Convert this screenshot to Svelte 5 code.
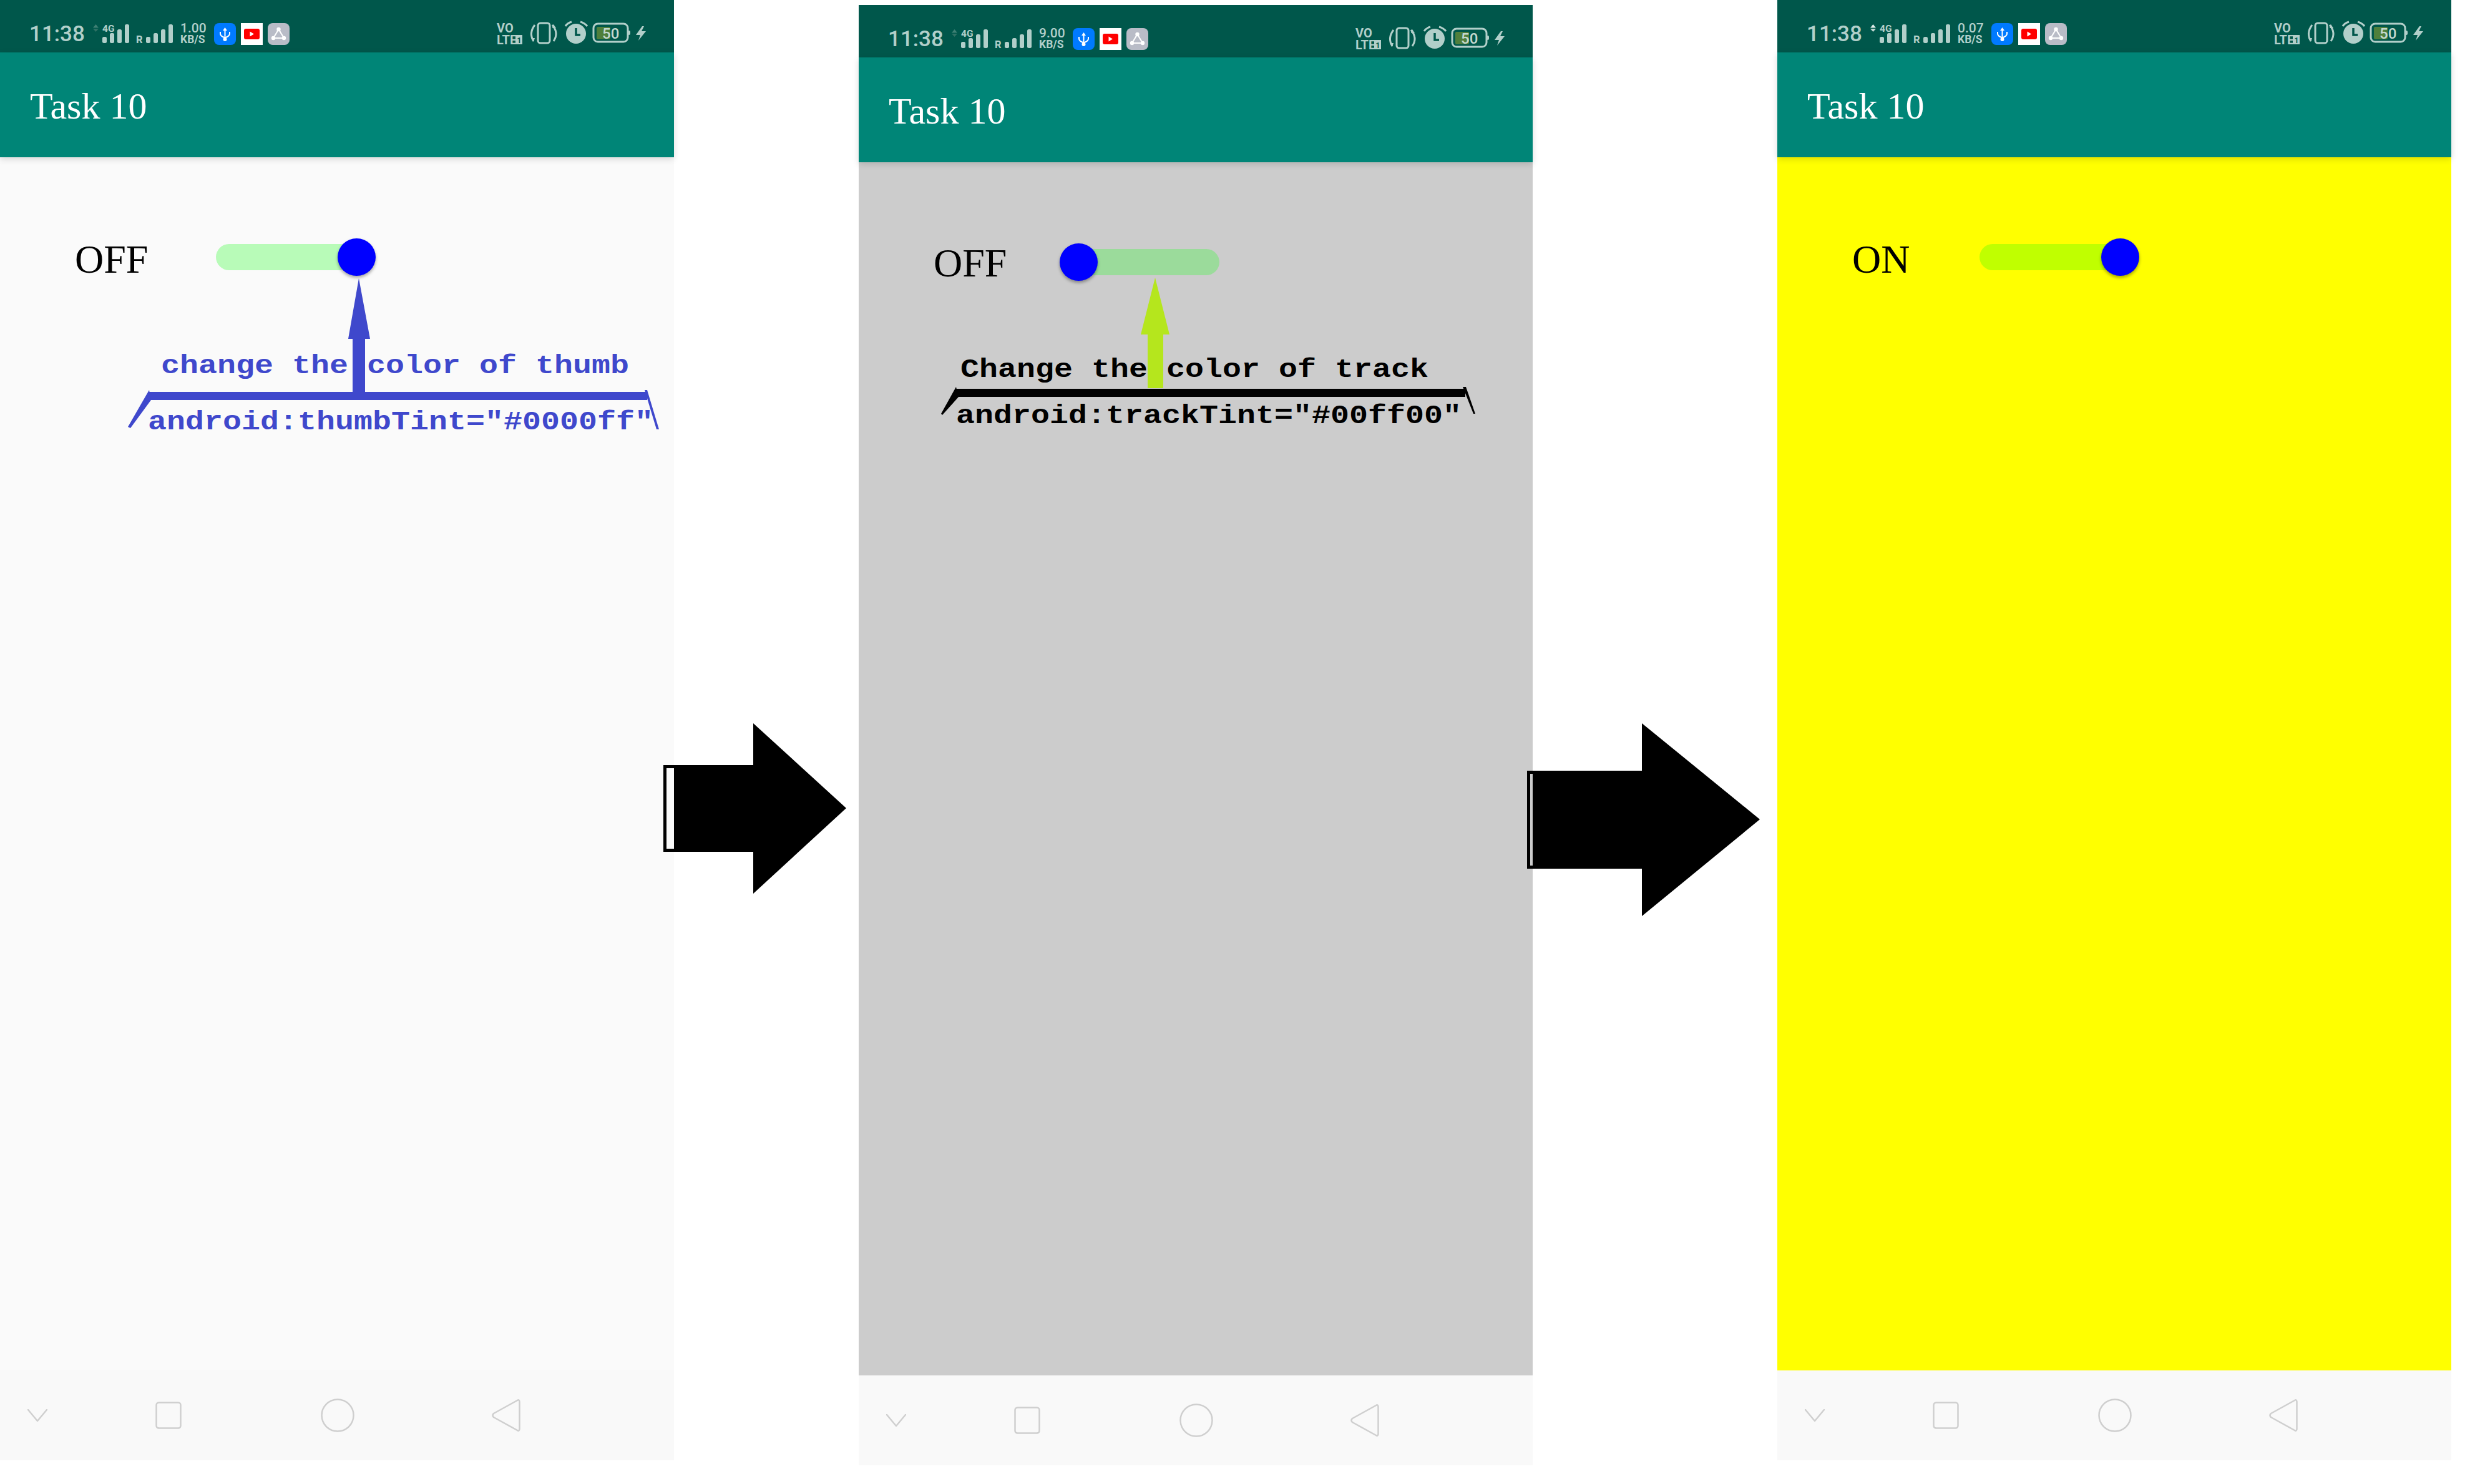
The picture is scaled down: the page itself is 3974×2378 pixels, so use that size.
<script>
  const panels = [
    { id: 'a', speed: '1.00', up: '#3f8074', down: '#2f7165', label: 'OFF', thumb: 'right',
      ink: '#3f48cc', arrowInk: '#3f48cc',
      line1: 'change the color of thumb', x1: 258, y1: 598,
      line2: 'android:thumbTint="#0000ff"', x2: 237, y2: 688,
      arrow: '575,446 593,543 585,543 585,630 565,630 565,543 558,543',
      bar: { x: 239, y: 628, w: 798, h: 13 },
      left: '239,625 242,641 209,686 205,684', right: '1033,625 1037,625 1056,688 1052,688' },
    { id: 'b', speed: '9.00', up: '#3f8074', down: '#2f7165', label: 'OFF', thumb: 'left',
      ink: '#000', arrowInk: '#b5e61d',
      line1: 'Change the color of track', x1: 163, y1: 596,
      line2: 'android:trackTint="#00ff00"', x2: 156, y2: 670,
      arrow: '475,437 498,528 488,528 488,614 463,614 463,528 452,528',
      bar: { x: 155, y: 615, w: 817, h: 13 },
      left: '156,612 160,628 134,657 132,655', right: '968,612 973,612 988,655 985,655' },
    { id: 'c', speed: '0.07', up: '#e4efed', down: '#c3d8d4', label: 'ON', thumb: 'right' }
  ];
  const sig = [[59, 10], [53, 16], [47, 22], [39, 30]];
</script>

<div class="page">
  {#each panels as p}
    <section class="panel {p.id}">
      <div class="status">
        <span class="time">11:38</span>
        <svg class="signal" width="130" height="36" viewBox="149 36 130 36">
          <polygon points="153.500,39 158,44.500 149,44.500" fill={p.up} />
          <polygon points="153.500,51 158,46 149,46" fill={p.down} />
          <text class="tiny" x="164" y="51">4G</text>
          {#each sig as s, i}
            <rect x={164 + i * 12} y={s[0]} width="7" height={s[1]} rx="2.500" />
            <rect x={234 + i * 12} y={s[0]} width="7" height={s[1]} rx="2.500" />
          {/each}
          <text class="tiny r" x="218" y="69">R</text>
        </svg>
        <div class="speed"><span>{p.speed}</span><small>KB/S</small></div>
        <div class="apps">
          <svg class="app" width="35" height="35" viewBox="0 0 35 35">
            <rect width="35" height="35" rx="8" fill="#007aff" />
            <path d="M17.500 7 21 12 14 12Z M16.500 12h2v14h-2Z" fill="#fff" />
            <circle cx="17.500" cy="26" r="3" fill="#fff" />
            <path d="M10 14v3q0 4 7.500 6.500q7.500-2.500 7.500-6.500v-3" fill="none" stroke="#fff" stroke-width="2" />
          </svg>
          <svg class="app" width="35" height="35" viewBox="0 0 35 35">
            <rect width="35" height="35" fill="#fff" />
            <rect x="5" y="9" width="25" height="17" rx="3" fill="#f00" />
            <polygon points="14.500,13.500 21,17.500 14.500,21.500" fill="#fff" />
          </svg>
          <svg class="app" width="35" height="35" viewBox="0 0 35 35">
            <rect width="35" height="35" rx="8" fill="#b9bcc7" />
            <path d="M17.500 10 9 24H26Z" fill="none" stroke="#fff" stroke-width="2" />
            <circle cx="17.500" cy="10" r="3.200" fill="#fff" /><circle cx="9" cy="24" r="3.200" fill="#fff" /><circle cx="26" cy="24" r="3.200" fill="#fff" />
          </svg>
        </div>
        <svg class="sysicons" width="250" height="50" viewBox="790 30 250 50">
          <text class="vo" x="796" y="53">VO</text>
          <text class="vo" x="796" y="72">LTE</text>
          <rect x="826" y="57" width="11" height="15" fill="#b2cfca" />
          <text class="one" x="828.500" y="69.500">1</text>
          <rect x="862" y="38" width="19" height="32" rx="4" class="line" />
          <path d="M857 41Q847 54 855 67M885 41Q896 54 887 67" class="line" />
          <path d="M851 62l4 6 2-6ZM891 46l-4-6-2 6Z" fill="#b2cfca" />
          <circle cx="923" cy="55" r="16" fill="#b2cfca" />
          <path d="M906 43Q909 38 916 36M930 36Q937 38 941 43" class="line" />
          <path d="M923 46V57H930" fill="none" stroke="#00574b" stroke-width="3.500" />
          <rect x="951" y="39" width="55" height="29" rx="7" class="line" />
          <rect x="1006" y="50" width="4" height="7" rx="2" fill="#b2cfca" />
          <rect x="956" y="44" width="22" height="20" rx="2" fill="#4f7f3c" />
          <text class="batt" x="965" y="63">50</text>
          <polygon points="1029,43 1019,57 1026,57 1023,66 1035,51 1028,51 1032,43" fill="#b2cfca" />
        </svg>
      </div>

      <header class="appbar">Task 10</header>

      <main class="content">
        <div class="row">
          <span class="label">{p.label}</span>
          <div class="switch">
            <div class="track"></div>
            <div class="thumb {p.thumb}"></div>
          </div>
        </div>
      </main>

      <nav class="nav">
        <svg width="32" height="20" viewBox="0 0 32 20"><path d="M1 1 16 19 31 1" /></svg>
        <svg width="42" height="44" viewBox="0 0 42 44"><rect x="1.500" y="1.500" width="39" height="41" rx="4" /></svg>
        <svg width="54" height="54" viewBox="0 0 54 54"><circle cx="27" cy="27" r="25.500" /></svg>
        <svg width="46" height="52" viewBox="0 0 46 52"><path d="M41 2Q44 0 44.500 4V48Q44 52 41 50L3 29Q0 26 3 23Z" /></svg>
      </nav>

      {#if p.line1}
        <svg class="note" width="1080" height="720" viewBox="0 0 1080 720">
          <polygon points={p.arrow} fill={p.arrowInk} />
          <rect x={p.bar.x} y={p.bar.y} width={p.bar.w} height={p.bar.h} fill={p.ink} />
          <polygon points={p.left} fill={p.ink} />
          <polygon points={p.right} fill={p.ink} />
          <text class="code" fill={p.ink} transform="translate({p.x1} {p.y1}) scale(1 .85)">{p.line1}</text>
          <text class="code" fill={p.ink} transform="translate({p.x2} {p.y2}) scale(1 .85)">{p.line2}</text>
        </svg>
      {/if}
    </section>
  {/each}

  <svg class="flow one" width="293" height="273" viewBox="1063 1159 293 273">
    <polygon points="1063,1226 1207,1226 1207,1159 1356,1295 1207,1432 1207,1365 1063,1365" />
    <rect x="1068" y="1231" width="12" height="129" fill="#fafafa" />
  </svg>
  <svg class="flow two" width="373" height="309" viewBox="2447 1159 373 309">
    <polygon points="2447,1235 2631,1235 2631,1159 2820,1313 2631,1468 2631,1392 2447,1392" />
    <rect x="2452" y="1240" width="4" height="147" fill="#ccc" />
  </svg>
</div>

<style>
  :global(body) { margin: 0; background: #fff; }
  .page { position: relative; display: flex; align-items: flex-start; width: 3974px; height: 2378px; background: #fff; overflow: hidden; }
  .panel { position: relative; display: flex; flex-direction: column; flex: none; width: 1080px; height: 2340px; }
  .panel.b { margin: 8px 392px 0 296px; }

  .status { display: flex; align-items: center; height: 84px; padding: 24px 40px 0 47px; box-sizing: border-box; background: #00574b; color: #b2cfca; font-family: Roboto, sans-serif; }
  .time { font-size: 35px; font-weight: 500; width: 102px; line-height: 1; }
  .signal { fill: #b2cfca; flex: none; }
  .tiny { font: 700 15.500px Roboto, sans-serif; }
  .tiny.r { font-size: 16.500px; }
  .speed { display: flex; flex-direction: column; margin-left: 10px; width: 54px; font-weight: 500; line-height: 18px; }
  .speed span { font-size: 21px; }
  .speed small { font-size: 17.500px; font-weight: 700; }
  .apps { display: flex; gap: 8px; }
  .app { display: block; }
  .sysicons { margin: 0 0 0 auto; flex: none; fill: #b2cfca; }
  .vo { font: 700 20px Roboto, sans-serif; }
  .one { font: 700 12px Roboto, sans-serif; fill: #00574b; }
  .line { fill: none; stroke: #b2cfca; stroke-width: 3; }
  .batt { font: 500 24px Roboto, sans-serif; fill: #c4d8cf; }

  .appbar { position: relative; z-index: 1; display: flex; align-items: center; box-sizing: border-box; height: 168px; padding: 5px 0 0 48px; background: #008577; color: #fff; font: 60px "Liberation Serif", serif; box-shadow: 0 3px 10px rgba(0, 0, 0, .14); }

  .content { flex: 1; padding: 130px 0 0 120px; }
  .a .content { background: #fafafa; }
  .b .content { background: #ccc; }
  .c .content { background: #ff0; }

  .row { display: flex; align-items: flex-start; gap: 109px; }
  .b .row { gap: 85px; }
  .c .row { gap: 112px; }
  .label { font: 64px/60px "Liberation Serif", serif; color: #000; padding-top: 4px; }
  .b .label { padding-top: 2px; }

  .switch { position: relative; width: 256px; height: 60px; }
  .track { position: absolute; left: 0; right: 0; top: 9px; height: 42px; border-radius: 21px; }
  .a .track { background: #b8fbb8; right: 4px; }
  .b .track { background: #9bdb9b; }
  .c .track { background: #c0ff00; right: 4px; }
  .thumb { position: absolute; top: 0; width: 61px; height: 60px; border-radius: 50%; background: #00f; box-shadow: 0 3px 5px rgba(0, 0, 0, .35); }
  .thumb.left { left: 0; }
  .thumb.right { right: 0; }

  .nav { display: flex; align-items: center; height: 144px; padding-left: 44px; background: #f9f9f9; }
  .nav svg { display: block; flex: none; fill: none; stroke: #cfcfcf; stroke-width: 2.500; stroke-linejoin: round; stroke-linecap: round; }
  .nav svg:nth-child(2) { margin-left: 173px; }
  .nav svg:nth-child(3) { margin-left: 223px; }
  .nav svg:nth-child(4) { margin-left: 220px; }

  .note { position: absolute; left: 0; top: 0; z-index: 2; pointer-events: none; }
  .code { font: 700 50px "Liberation Mono", monospace; white-space: pre; }

  .flow { position: absolute; z-index: 3; fill: #000; }
  .flow.one { left: 1063px; top: 1159px; }
  .flow.two { left: 2447px; top: 1159px; }
</style>
